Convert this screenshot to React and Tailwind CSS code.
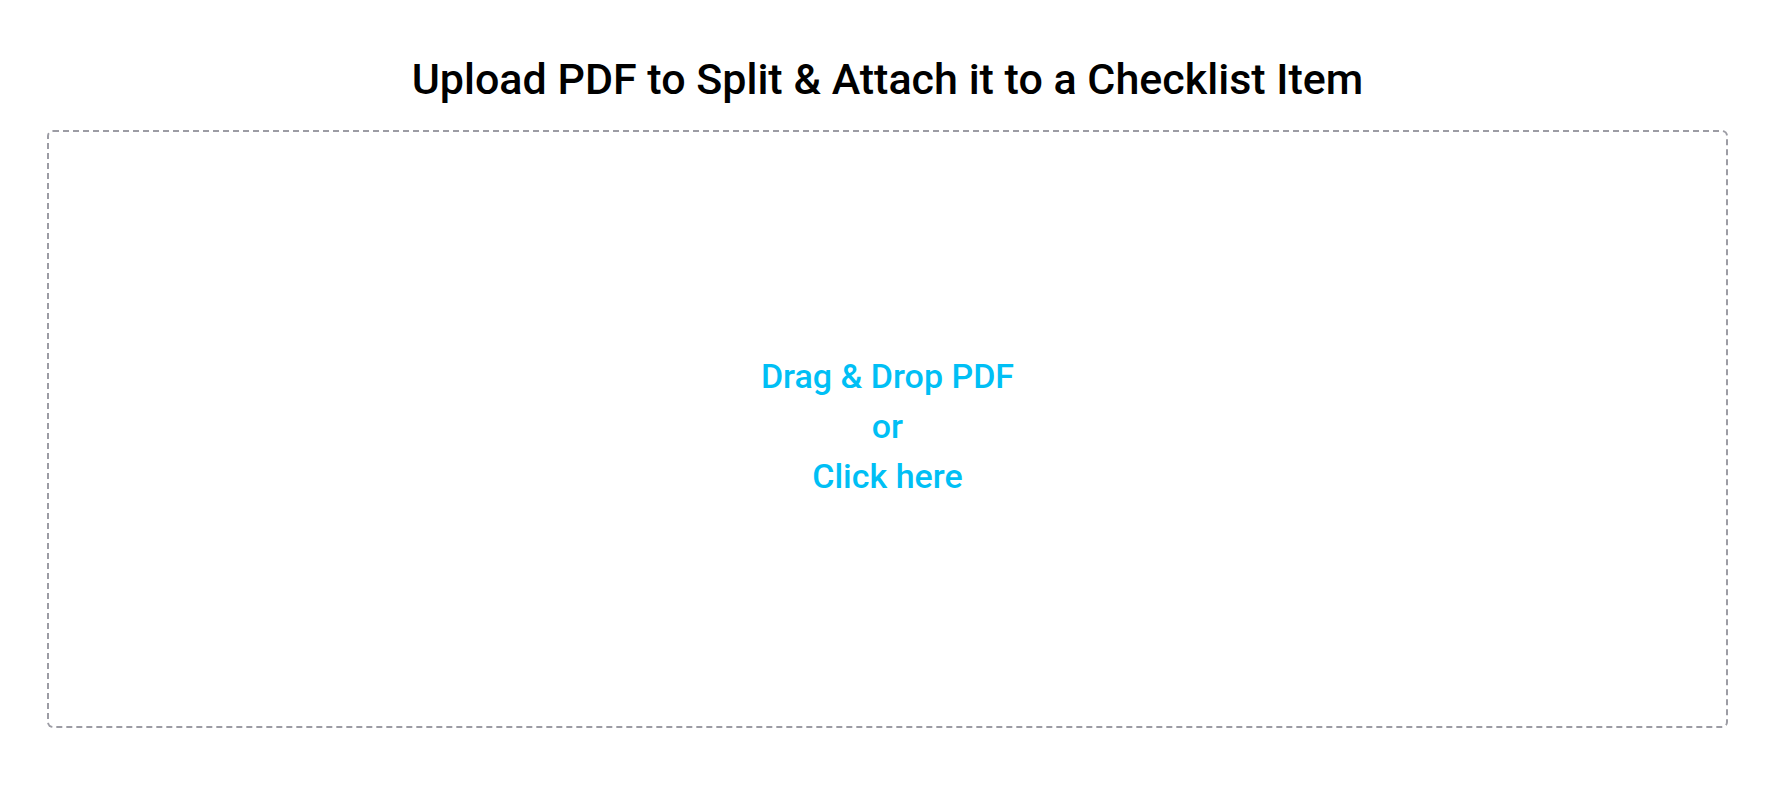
import React from 'react';

// Upload drop zone for splitting a PDF and attaching it to a checklist item
const App = () => (
    <div className="min-h-screen bg-white font-['Roboto',sans-serif]">
        <div className="w-[1775px] px-[47px] pt-[50px]">
            <h1 className="text-center text-[43px] leading-[58px] font-medium text-black">
                Upload PDF to Split &amp; Attach it to a Checklist Item
            </h1>
            <div className="mt-[22px] h-[598px] border-2 border-dashed border-[#9c9ca4] rounded-md flex items-center justify-center cursor-pointer">
                <div className="text-center text-[34px] leading-[50px] font-medium text-[#00bff5] pb-[6px]">
                    <div>Drag &amp; Drop PDF</div>
                    <div>or</div>
                    <div>Click here</div>
                </div>
            </div>
        </div>
    </div>
);

export default App;
